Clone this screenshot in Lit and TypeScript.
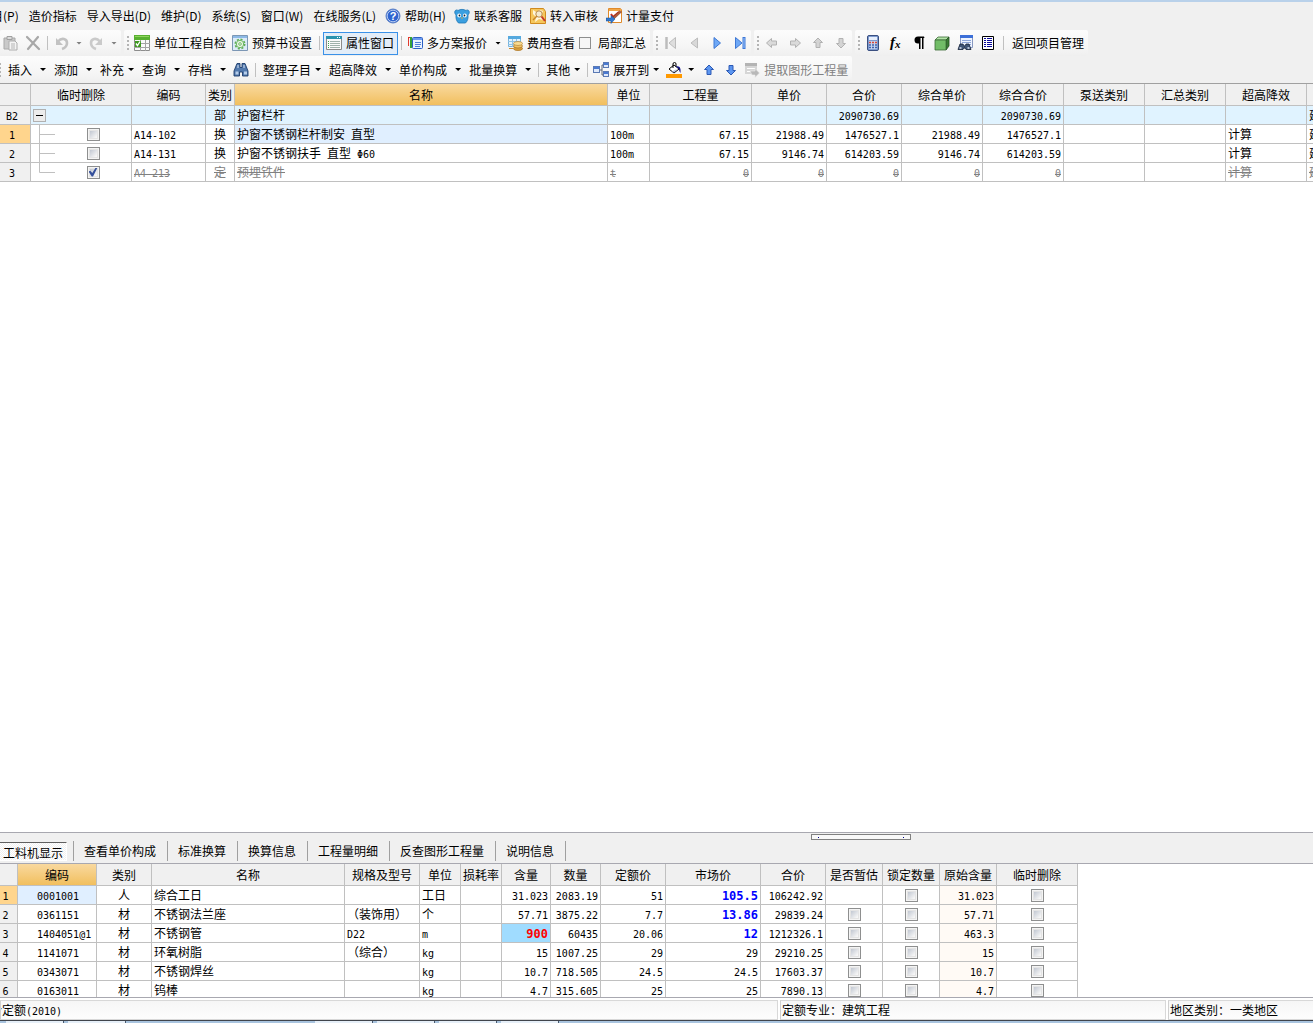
import { LitElement, html, css, svg, nothing } from "lit";
import type { TemplateResult } from "lit";
import { customElement } from "lit/decorators.js";
import { classMap } from "lit/directives/class-map.js";

const ART: Record<string, unknown> = {
  paste: svg`<path d="M1 3h11v11H1z" fill="#c9c9c9" stroke="#a9a9a9"/><path d="M4 1.500h5v3H4z" fill="#dcdcdc" stroke="#a0a0a0"/><path d="M6 6h6l2 2v7H6z" fill="#f4f4f4" stroke="#adadad"/><path d="M8 9h4M8 11h4M8 13h4" stroke="#b5b5b5"/>`,
  remove: svg`<path d="M2 2l12 12M13 2L3 14" stroke="#a8a8a8" stroke-width="2.200" stroke-linecap="round" fill="none"/>`,
  undo: svg`<path d="M4 6.500c4-4.500 9-2.500 9 1.500 0 3-2 5-5 6" stroke="#c2c2c2" stroke-width="2.600" fill="none"/><path d="M2 3v7h7z" fill="#c2c2c2"/>`,
  redo: svg`<path d="M11 6.500c-4-4.500-9-2.500-9 1.500 0 3 2 5 5 6" stroke="#cacaca" stroke-width="2.600" fill="none"/><path d="M13 3v7H6z" fill="#cacaca"/>`,
  check: svg`<path d="M.5.5h15v15H.5z" fill="#fafafa" stroke="#8c8c8c"/><path d="M0 0h16v5H0z" fill="#58b030"/><path d="M1 1h14v1H1z" fill="#8ed45c"/><path d="M6.500 5v11M11.500 5v11M0 8.500h16M0 12.500h16" stroke="#a4a4a4"/><path d="M1 6h6v6H1z" fill="#3f9a20"/><path d="M2 8.500l1.500 2 2.500-4" stroke="#fff" stroke-width="1.300" fill="none"/>`,
  gear: svg`<path d="M.5.5h15v15H.5z" fill="#dcebf8" stroke="#7c97b5"/><path d="M1 1h14v2H1z" fill="#8db9e6"/><circle cx="8" cy="9" r="4.600" fill="none" stroke="#5fae55" stroke-width="1.800" stroke-dasharray="2 1.600"/><circle cx="8" cy="9" r="3.700" fill="#e6f5e2" stroke="#6fb866"/><circle cx="8" cy="9" r="1.300" fill="#fff" stroke="#6fb866"/>`,
  props: svg`<path d="M.5 1.500h15v13H.5z" fill="#fafafa" stroke="#8b8b8b"/><path d="M0 1h16v3H0z" fill="#2a93ae"/><path d="M11 2.500h1M13 2.500h1" stroke="#fff"/><path d="M2 6.500h1M2 8.500h1M2 10.500h1M2 12.500h1" stroke="#3aa44c"/><path d="M4 6.500h10M4 8.500h10M4 10.500h10M4 12.500h10" stroke="#9fb1aa"/>`,
  plans: svg`<path d="M1.500 3v8M1 2.500h3" stroke="#e13b2e" fill="none"/><path d="M4 2v11" stroke="#35a238" stroke-width="2" fill="none"/><rect x="5.500" y="2.500" width="10" height="11" rx="1" fill="#eaf2ff" stroke="#2c5fc4"/><path d="M6 3h9v2H6z" fill="#6d9cf0"/><path d="M8 7.500h6M8 9.500h6M8 11.500h5" stroke="#4e7fd6"/>`,
  fee: svg`<path d="M1.500 1.500h12v10h-12z" fill="#e3f3ff" stroke="#78b4dc"/><path d="M1 1h13v3H1z" fill="#56a9de"/><path d="M5.500 4v8M9.500 4v8M1 6.500h12M1 9.500h12" stroke="#8fc3e6"/><ellipse cx="11" cy="13.500" rx="4.500" ry="2" fill="#dba23d" stroke="#a86e1c" stroke-width=".7"/><ellipse cx="11" cy="11" rx="4.500" ry="2" fill="#efc367" stroke="#a86e1c" stroke-width=".7"/><ellipse cx="11" cy="8.500" rx="4.500" ry="2" fill="#f8dc93" stroke="#b98535" stroke-width=".7"/><path d="M2 13h4v1H2z" fill="#c78a32"/>`,
  first: svg`<path d="M3.500 2v12" stroke="#bcbcbc" stroke-width="2.500"/><path d="M12.500 2.500v11L6 8z" fill="#dedede" stroke="#bcbcbc"/>`,
  prev: svg`<path d="M11.500 3v10L5 8z" fill="#d8d8d8" stroke="#bcbcbc"/>`,
  next: svg`<path d="M5 2.500v11L11.500 8z" fill="#6ea8f6" stroke="#3f78d4"/>`,
  last: svg`<path d="M3.500 2.500v11L10 8z" fill="#6ea8f6" stroke="#3f78d4"/><path d="M12 2v12" stroke="#3d78d8" stroke-width="3"/><path d="M12 3v10" stroke="#9cc4fb"/>`,
  left: svg`<path d="M2.500 8l5-4.500v2.500h5v4h-5v2.500z" fill="#dadada" stroke="#b2b2b2"/>`,
  right: svg`<path d="M13.500 8l-5-4.500v2.500h-5v4h5v2.500z" fill="#dadada" stroke="#b2b2b2"/>`,
  up: svg`<path d="M8 3l4.500 4.500H10v5H6v-5H3.500z" fill="#d4d4d4" stroke="#b2b2b2"/>`,
  down: svg`<path d="M8 13l4.500-4.500H10v-5H6v5H3.500z" fill="#d4d4d4" stroke="#b2b2b2"/>`,
  upBlue: svg`<path d="M8 3l4.500 4.500H10v5H6v-5H3.500z" fill="#5c96f0" stroke="#2c59b4"/>`,
  downBlue: svg`<path d="M8 13l4.500-4.500H10v-5H6v5H3.500z" fill="#5c96f0" stroke="#2c59b4"/>`,
  calc: svg`<rect x="2.500" y=".5" width="11" height="15" rx="1.500" fill="#7e9bd0" stroke="#3a4f80"/><path d="M4 2h8v3H4z" fill="#e6eefc"/><path d="M4 6h8v8H4z" fill="#c6d4ef"/><path d="M4 7.500h2M7 7.500h2M10 7.500h2" stroke="#d8483a" stroke-width="1.500"/><path d="M4 10h2M7 10h2M10 10h2M4 12.500h2M7 12.500h2M10 12.500h2" stroke="#3f62ac" stroke-width="1.500"/>`,
  fx: svg`<text x="2" y="12" font-family="Liberation Serif, serif" font-size="15" font-style="italic" font-weight="bold">f</text><text x="7" y="13" font-family="Liberation Serif, serif" font-size="11" font-style="italic" font-weight="bold">x</text>`,
  pilcrow: svg`<path d="M13 1.500H7a3.500 3.500 0 0 0 0 7h1V14h1.500V3H11v11h1.500V3h1z"/>`,
  cube: svg`<path d="M1 5l3-3h11l-3 3z" fill="#b4e4a9" stroke="#3b6a36" stroke-width=".8"/><path d="M12 5l3-3v9l-3 4z" fill="#3a7d34" stroke="#24501f" stroke-width=".8"/><path d="M1 5h11v10H1z" fill="#72bd67" stroke="#3b6a36" stroke-width=".8"/>`,
  find: svg`<path d="M3.500.5h12v12h-12z" fill="#eef4ff" stroke="#8797c0"/><path d="M3 0h13v3H3z" fill="#3c6fd8"/><path d="M5 5.500h9M5 7.500h9M11 9.500h3" stroke="#8fa6d8"/><path d="M3 9h3l1 2h1l1-2h3l2 5.500H9L8 13H7l-1 1.500H1z" fill="#3f5475" stroke="#152238" stroke-width=".8"/><path d="M2.500 13h2M10.500 13h2" stroke="#dce6f5" stroke-width="1.500"/>`,
  list: svg`<path d="M2.500 1.500h11v13h-11z" fill="#fff" stroke="#000"/><path d="M4 3.500h2M4 5.500h2M4 7.500h2M4 9.500h2M4 11.500h2M7 3.500h5M7 5.500h5M7 7.500h5M7 9.500h5M7 11.500h5" stroke="#0b0b9c"/>`,
  binoc: svg`<path d="M4 1.500h3v4h2v-4h3l3 7.500v5H9.500v-4h-3v4H1V9z" fill="#5279ad" stroke="#1d3c6c" stroke-width=".9"/><path d="M2.500 9.500h3v3h-3zM11 9.500h3v3h-3z" fill="#b6cdea"/><path d="M5 3v3M11 3v3" stroke="#d5e3f5"/>`,
  expand: svg`<path d="M6 8h3M9 3v10M9 3h2M9 13h2" stroke="#5a6478" fill="none"/><rect x=".5" y="4.500" width="6" height="6" fill="#dfe9fa" stroke="#5a79b4"/><path d="M1 5h5v2H1z" fill="#4a7ad2"/><rect x="10.500" y=".5" width="5" height="5" fill="#dfe9fa" stroke="#5a79b4"/><path d="M11 1h4v2h-4z" fill="#4a7ad2"/><rect x="10.500" y="9.500" width="5" height="5" fill="#dfe9fa" stroke="#5a79b4"/><path d="M11 10h4v2h-4z" fill="#4a7ad2"/>`,
  bucket: svg`<path d="M0 12h16v4H0z" fill="#ff9900"/><path d="M3 7l5-4 5 4-5 4z" fill="#fff" stroke="#000"/><path d="M7 6V2q0-1.500 1.500-1.500T10 2v3" fill="none" stroke="#000"/><path d="M10 4.500c4-1 5 2 4.500 6.500-1-1-1.500-3-1.500-4z" fill="#10108c"/><path d="M6 9.500l5-2.500-3 3.500z" fill="#a9b4d8"/>`,
  extract: svg`<path d="M1 1h12v11H1z" fill="#d6d6d6"/><path d="M1 1h12v3H1z" fill="#b4b4b4"/><path d="M3 6.500h8M3 9.500h4" stroke="#fff"/><path d="M6 9h5V6.500L15.500 11 11 15.500V13H8z" fill="#b9b9b9" stroke="#ececec" stroke-width=".6"/>`,
  help: svg`<circle cx="8" cy="8" r="7" fill="#2f64cf" stroke="#5b7fc4"/><circle cx="8" cy="8" r="5.800" fill="none" stroke="#d7e3f8" stroke-width=".8"/><text x="8" y="12" text-anchor="middle" font-family="Liberation Sans, sans-serif" font-size="11" font-weight="bold" fill="#fff">?</text>`,
  mascot: svg`<path d="M4 2.500c2.500-1.500 5.500-1.500 8 0 2-1.500 4 .5 3 3-.3.800-.8 1-1 1.500.3 3.500-.5 6-2.500 8h-7C2.500 13 1.700 10.500 2 7 1.800 6.500 1.300 6.300 1 5.500 0 3 2 1 4 2.500z" fill="#3a9fe0" stroke="#1b74b4" stroke-width=".8"/><circle cx="5.200" cy="7.500" r="1.900" fill="#fff"/><circle cx="10.800" cy="7.500" r="1.900" fill="#fff"/><circle cx="5.500" cy="7.500" r=".9" fill="#123"/><circle cx="10.500" cy="7.500" r=".9" fill="#123"/><path d="M7 9.500h2L8 11z" fill="#f3b12c"/>`,
  review: svg`<path d="M.5.500h13l2 3v12H.5z" fill="#f6c75c" stroke="#d08a1e"/><path d="M3 2l3 2 4-2 3 1-2 5 2 4-4-1-4 3 1-5-3-3z" fill="#fff6dc"/><circle cx="9" cy="6" r="3.200" fill="#f4ead0" stroke="#b98a4a"/><path d="M11.500 8.500L15 13" stroke="#c6372a" stroke-width="2"/><path d="M3 12l4-4" stroke="#c6842a" stroke-width="1.500"/>`,
  pay: svg`<path d="M2.500.5h12l1 1v13h-13z" fill="#fff" stroke="#e08a2a"/><path d="M3 1h12v2H3z" fill="#f0a648"/><path d="M5 6l2 3 6-5" stroke="#c9301f" stroke-width="2" fill="none"/><path d="M15.500 4L7 12l-2 1 .5-2.500L13.500 3z" fill="#b65a36" stroke="#6e2c18" stroke-width=".5"/><path d="M0 10h5V7.500L9 11l-4 4.500V13H0z" fill="#3179cf" stroke="#174c92" stroke-width=".5"/>`,
};

const icon = (name: string) =>
  html`<svg class="icon" viewBox="0 0 16 16" width="16" height="16" aria-hidden="true">${ART[name]}</svg>`;

/** Splits a label so that half-width characters get the monospaced face. */
const mixed = (s: string) =>
  s.split(/([\x20-\x7e\u03a6]+)/).map((p, i) => (i % 2 ? html`<span class="m">${p}</span>` : p));

interface Item {
  icon?: string;
  text?: string;
  name?: string;
  arrow?: "wide" | "tight";
  off?: boolean;
  on?: boolean;
  sep?: boolean;
  box?: boolean;
}
const SEP: Item = { sep: true };

const STRIPS: { grip: boolean; spaced?: boolean; items: Item[] }[] = [
  { grip: false, items: [
    { icon: "paste", name: "粘贴", off: true }, { icon: "remove", name: "删除", off: true }, SEP,
    { icon: "undo", name: "撤销", arrow: "wide", off: true }, { icon: "redo", name: "恢复", arrow: "wide", off: true } ] },
  { grip: true, items: [
    { icon: "check", text: "单位工程自检" }, { icon: "gear", text: "预算书设置" }, SEP,
    { icon: "props", text: "属性窗口", on: true }, SEP,
    { icon: "plans", text: "多方案报价", arrow: "wide" }, { icon: "fee", text: "费用查看" }, { text: "局部汇总", box: true } ] },
  { grip: true, spaced: true, items: [
    { icon: "first", name: "首页", off: true }, { icon: "prev", name: "上一个", off: true },
    { icon: "next", name: "下一个" }, { icon: "last", name: "末页" } ] },
  { grip: true, spaced: true, items: [
    { icon: "left", name: "左移", off: true }, { icon: "right", name: "右移", off: true },
    { icon: "up", name: "上移", off: true }, { icon: "down", name: "下移", off: true } ] },
  { grip: true, spaced: true, items: [
    { icon: "calc", name: "计算器" }, { icon: "fx", name: "函数" }, { icon: "pilcrow", name: "段落" },
    { icon: "cube", name: "图形" }, { icon: "find", name: "查找" }, { icon: "list", name: "列表" }, SEP,
    { text: "返回项目管理" } ] },
];

const ACTIONS: Item[] = [
  { text: "插入", arrow: "wide" }, { text: "添加", arrow: "wide" }, { text: "补充", arrow: "tight" },
  { text: "查询", arrow: "wide" }, { text: "存档", arrow: "wide" }, { icon: "binoc", name: "查找" }, SEP,
  { text: "整理子目", arrow: "tight" }, { text: "超高降效", arrow: "wide" }, { text: "单价构成", arrow: "wide" },
  { text: "批量换算", arrow: "wide" }, SEP, { text: "其他", arrow: "tight" }, SEP,
  { icon: "expand", text: "展开到", arrow: "tight" }, { icon: "bucket", name: "填充颜色", arrow: "wide" },
  { icon: "upBlue", name: "上移" }, { icon: "downBlue", name: "下移" },
  { icon: "extract", text: "提取图形工程量", off: true },
];

const MENU: { text: string; icon?: string }[] = [
  { text: "项目(P)" }, { text: "造价指标" }, { text: "导入导出(D)" }, { text: "维护(D)" }, { text: "系统(S)" },
  { text: "窗口(W)" }, { text: "在线服务(L)" }, { text: "帮助(H)", icon: "help" },
  { text: "联系客服", icon: "mascot" }, { text: "转入审核", icon: "review" }, { text: "计量支付", icon: "pay" },
];

interface Col { t: string; w: number; a?: "l" | "c" | "r" | "code"; }

const COLS: Col[] = [
  { t: "临时删除", w: 101 }, { t: "编码", w: 74 }, { t: "类别", w: 29, a: "c" }, { t: "名称", w: 373 },
  { t: "单位", w: 42 }, { t: "工程量", w: 102, a: "r" }, { t: "单价", w: 75, a: "r" }, { t: "合价", w: 75, a: "r" },
  { t: "综合单价", w: 81, a: "r" }, { t: "综合合价", w: 81, a: "r" }, { t: "泵送类别", w: 81 },
  { t: "汇总类别", w: 81 }, { t: "超高降效", w: 81 }, { t: "", w: 81 },
];
const ROWS: { no: string; kind: "group" | "row" | "gone"; cells: string[] }[] = [
  { no: "B2", kind: "group", cells: ["", "部", "护窗栏杆", "", "", "", "2090730.69", "", "2090730.69", "", "", "", "建"] },
  { no: "1", kind: "row", cells: ["A14-102", "换", "护窗不锈钢栏杆制安 直型", "100m", "67.15", "21988.49", "1476527.1", "21988.49", "1476527.1", "", "", "计算", "建"] },
  { no: "2", kind: "row", cells: ["A14-131", "换", "护窗不锈钢扶手 直型 Φ60", "100m", "67.15", "9146.74", "614203.59", "9146.74", "614203.59", "", "", "计算", "建"] },
  { no: "3", kind: "gone", cells: ["A4-213", "定", "预埋铁件", "t", "0", "0", "0", "0", "0", "", "", "计算", "建"] },
];

const RES_COLS: Col[] = [
  { t: "编码", w: 79, a: "code" }, { t: "类别", w: 55, a: "c" }, { t: "名称", w: 193 }, { t: "规格及型号", w: 75 },
  { t: "单位", w: 41 }, { t: "损耗率", w: 41 }, { t: "含量", w: 49, a: "r" }, { t: "数量", w: 50, a: "r" },
  { t: "定额价", w: 65, a: "r" }, { t: "市场价", w: 95, a: "r" }, { t: "合价", w: 65, a: "r" },
  { t: "是否暂估", w: 57, a: "c" }, { t: "锁定数量", w: 57, a: "c" }, { t: "原始含量", w: 57, a: "r" },
  { t: "临时删除", w: 81, a: "c" },
];
const BOX = "[]";
const RES: string[][] = [
  ["0001001", "人", "综合工日", "", "工日", "", "31.023", "2083.19", "51", "105.5", "106242.92", "", BOX, "31.023", BOX],
  ["0361151", "材", "不锈钢法兰座", "（装饰用）", "个", "", "57.71", "3875.22", "7.7", "13.86", "29839.24", BOX, BOX, "57.71", BOX],
  ["1404051@1", "材", "不锈钢管", "D22", "m", "", "900", "60435", "20.06", "12", "1212326.1", BOX, BOX, "463.3", BOX],
  ["1141071", "材", "环氧树脂", "（综合）", "kg", "", "15", "1007.25", "29", "29", "29210.25", BOX, BOX, "15", BOX],
  ["0343071", "材", "不锈钢焊丝", "", "kg", "", "10.7", "718.505", "24.5", "24.5", "17603.37", BOX, BOX, "10.7", BOX],
  ["0163011", "材", "钨棒", "", "kg", "", "4.7", "315.605", "25", "25", "7890.13", BOX, BOX, "4.7", BOX],
];

const TABS = ["工料机显示", "查看单价构成", "标准换算", "换算信息", "工程量明细", "反查图形工程量", "说明信息"];

const shared = css`
  * { box-sizing: border-box; }
  button, input { font: inherit; color: inherit; margin: 0; }
  button { background: none; border: 0; padding: 0; white-space: nowrap; }
  .icon { display: block; flex: none; }
  .m { font-family: "DejaVu Sans Mono", "Liberation Mono", monospace; font-size: 10px; line-height: 0; white-space: pre; }
`;

@customElement("tool-strip")
class ToolStrip extends LitElement {
  static properties = { items: { attribute: false }, grip: { type: Boolean }, spaced: { type: Boolean } };
  declare items: Item[];
  declare grip: boolean;
  declare spaced: boolean;

  static styles = [shared, css`
    :host { display: flex; flex: none; }
    .strip { display: flex; align-items: center; height: 100%; border-radius: 2px; background: linear-gradient(#fcfcfc, #f6f6f6 60%, #efefef); }
    .grip { width: 2px; height: 14px; margin: 0 3px; background: repeating-linear-gradient(#b4b4b4 0 2px, transparent 2px 4px); }
    .spaced { gap: 1px; }
    .spaced .grip { margin-right: 1px; }
    .sep { width: 1px; height: 14px; margin: 0 3px; background: #c0c0c0; }
    .btn { display: flex; align-items: center; height: 23px; padding: 0 4px; gap: 4px; }
    .btn.pic { padding-left: 2px; }
    .btn.bare { padding: 0 3px; }
    .btn.drop { padding-right: 4px; }
    .btn.on { border: 1px solid #3a91e8; background: #e3edf8; padding-right: 3px; }
    .btn:disabled { color: #808080; }
    .arrow { width: 6px; height: 3px; background: currentColor; clip-path: polygon(0 0, 100% 0, 50% 100%); }
    .wide { margin-left: 4px; }
    .bare .wide { margin-left: 2px; }
    .tick { display: flex; align-items: center; gap: 7px; padding-right: 4px; }
    .tick input { appearance: none; width: 12px; height: 12px; border: 1px solid #8e8f8f; background: #f6f6f6; }
  `];

  private item(i: Item): TemplateResult {
    if (i.sep) return html`<span class="sep"></span>`;
    if (i.box) return html`<label class="tick"><input type="checkbox" />${i.text}</label>`;
    const cls = { btn: true, pic: !!i.icon && !!i.text, bare: !i.text, drop: !!i.arrow, on: !!i.on };
    return html`<button class=${classMap(cls)} ?disabled=${i.off} aria-label=${i.text ?? i.name}>
      ${i.icon ? icon(i.icon) : nothing}${i.text ? html`<span>${i.text}</span>` : nothing}${i.arrow
        ? html`<span class="arrow ${i.arrow}"></span>` : nothing}
    </button>`;
  }

  render() {
    return html`<div class=${classMap({ strip: true, spaced: this.spaced })}>
      ${this.grip ? html`<span class="grip"></span>` : nothing}${this.items.map((i) => this.item(i))}
    </div>`;
  }
}

const gridStyles = css`
  :host { display: block; overflow: hidden; }
  table { border-collapse: separate; border-spacing: 0; table-layout: fixed; width: 0; }
  th, td { height: 19px; padding: 0 2px; border-right: 1px solid #c0c0c0; border-bottom: 1px solid #c0c0c0; line-height: 18px; white-space: nowrap; overflow: hidden; font-weight: 400; text-align: left; }
  thead th { height: 22px; padding: 0; text-align: center; background: #f0f0f0; }
  thead th.hot { background: linear-gradient(#f9d99f, #f1bf5e); }
  tbody th { padding: 0 6px 0 0; text-align: center; background: #f0f0f0; }
  tbody th.hot { background: #ffd58d; }
  .c { text-align: center; padding: 0; }
  .r { text-align: right; }
  .sel { background: #e0efff; }
  .box { display: block; appearance: none; width: 13px; height: 13px; margin: 0 auto; padding: 1px; border: 1px solid #8e8f8f; background: linear-gradient(135deg, #b9c0cc, #f6f6f6 80%) content-box, #f4f4f4; outline: 1px solid #e4e4e4; outline-offset: -3px; }
  .box:checked::before { content: ""; display: block; width: 9px; height: 9px; background: #35509c; clip-path: polygon(0 45%, 20% 35%, 42% 62%, 80% 0, 100% 0, 50% 100%, 36% 100%); }
`;

@customElement("quota-grid")
class QuotaGrid extends LitElement {
  static styles = [shared, gridStyles, css`
    .group td { background: #e0f3ff; }
    .gone td { color: #808080; text-decoration: line-through; }
    .gone td .m { display: inline-block; text-decoration: line-through; }
    .tree { padding: 0; }
    .node { display: flex; align-items: center; height: 18px; }
    .branch { display: block; flex: none; overflow: visible; }
    .toggle { display: grid; place-items: center; width: 13px; height: 13px; margin-left: 2px; border: 1px solid #b0b0b0; background: #ececec; }
    .toggle::before { content: ""; width: 7px; height: 1px; background: #000; }
  `];

  private tree(kind: string, no: string) {
    if (kind === "group") return html`<div class="node"><button class="toggle" aria-label="折叠"></button></div>`;
    return html`<div class="node">
      <svg class="branch" width="24" height="18" aria-hidden="true">
        <path d=${kind === "gone" ? "M8.500 0V9.500H24" : "M8.500 0V19M8.500 9.500H24"} fill="none" stroke="#c0c0c0" />
      </svg>
      <input class="box" type="checkbox" aria-label=${"临时删除 " + no} .checked=${kind === "gone"} />
    </div>`;
  }

  render() {
    return html`<table>
      <colgroup><col style="width:31px" />${COLS.map((c) => html`<col style="width:${c.w}px" />`)}</colgroup>
      <thead><tr><th></th>${COLS.map((c) => html`<th class=${c.t === "名称" ? "hot" : ""}>${c.t}</th>`)}</tr></thead>
      <tbody>${ROWS.map((r) => html`<tr class=${r.kind}>
        <th class=${r.no === "1" ? "hot" : ""}>${mixed(r.no)}</th>
        <td class="tree">${this.tree(r.kind, r.no)}</td>
        ${r.cells.map((v, i) => html`<td class="${COLS[i + 1].a ?? "l"} ${r.no === "1" && i === 2 ? "sel" : ""}">${mixed(v)}</td>`)}
      </tr>`)}</tbody>
    </table>`;
  }
}

@customElement("resource-grid")
class ResourceGrid extends LitElement {
  static styles = [shared, gridStyles, css`
    :host { height: 133px; background: #fff; }
    .code { padding-left: 19px; }
    .price { font-weight: 700; color: #00f; }
    .edited { font-weight: 700; color: #f00; background: #a0dcff; }
    .price .m, .edited .m { font-size: 12px; }
    .origin { background: #fffaf5; }
  `];

  private cls(row: number, col: number) {
    return classMap({
      [RES_COLS[col].a ?? "l"]: true,
      sel: row === 0 && col === 0,
      edited: row === 2 && col === 6,
      price: row < 3 && col === 9,
      origin: col === 13,
    });
  }

  render() {
    return html`<table>
      <colgroup><col style="width:18px" />${RES_COLS.map((c) => html`<col style="width:${c.w}px" />`)}</colgroup>
      <thead><tr><th></th>${RES_COLS.map((c, i) => html`<th class=${i === 0 ? "hot" : ""}>${c.t}</th>`)}</tr></thead>
      <tbody>${RES.map((r, n) => html`<tr>
        <th class=${n === 0 ? "hot" : ""}>${mixed(String(n + 1))}</th>
        ${r.map((v, i) => html`<td class=${this.cls(n, i)}>${v === BOX
          ? html`<input class="box" type="checkbox" aria-label="${RES_COLS[i].t} ${n + 1}" />` : mixed(v)}</td>`)}
      </tr>`)}</tbody>
    </table>`;
  }
}

@customElement("app-root")
class AppRoot extends LitElement {
  static styles = [shared, css`
    :host { display: flex; flex-direction: column; height: 100vh; overflow: hidden; background: #fff; color: #000; font: 12px/18px "Noto Sans CJK SC", "Liberation Sans", sans-serif; }
    .top { flex: none; background: #f0f0f0; border-top: 2px solid #b9d1ea; border-bottom: 1px solid #a0a0a0; }
    .menu { display: flex; align-items: center; gap: 10px; height: 28px; margin-left: -21px; overflow: hidden; }
    .entry { display: flex; align-items: center; gap: 4px; }
    .entry.pic { margin-left: -1px; }
    .entry.pic ~ .pic { margin-left: -2px; }
    .bar { display: flex; gap: 3px; height: 26px; }
    .bar.second { height: 27px; margin-left: -4px; }
    .work { flex: 1; min-height: 0; }
    .panel { flex: none; background: #f0f0f0; border-top: 1px solid #a8a8b0; position: relative; }
    .handle { position: absolute; top: 1px; left: 811px; width: 100px; height: 6px; border: 1px solid #808080; background: #f8f8f8; display: flex; justify-content: space-between; align-items: center; padding: 0 6px; }
    .handle::before, .handle::after { content: ""; width: 1px; height: 1px; background: #00008b; }
    .tabs { display: flex; height: 31px; padding-top: 8px; border-bottom: 1px solid #a8a8b0; }
    .tab { height: 20px; padding: 0 11px 0 10px; border-right: 1px solid #a0a0a0; }
    .tab.first { padding: 0 6px 0 0; }
    .pressed { display: block; height: 19px; padding: 1px 3px 0; border-top: 1px solid #606060; border-right: 1px solid #fff; border-bottom: 1px solid #fff; background: repeating-conic-gradient(#f0f0f0 0 25%, #fff 0 50%) 0 0 / 2px 2px; line-height: 17px; }
    .status { display: flex; flex: none; gap: 2px; padding-top: 2px; border-top: 1px solid #a8a8b0; border-bottom: 1px solid #40444c; }
    .cell { height: 20px; padding-left: 1px; border: 1px solid #d8d8d8; border-left-color: #d0d0d0; background: linear-gradient(#f6f6f6, #fdfdfd); white-space: nowrap; overflow: hidden; }
    .quota { flex: 1; }
    .quota span.clip { display: block; margin-left: -12px; }
    .major { width: 386px; }
    .area { width: 145px; border-right: 0; }
    .dock { display: flex; flex: none; gap: 4px; height: 2px; padding-left: 6px; background: #a9c4df; }
    .slot { width: 58px; background: #e6eff8; border-right: 1px solid #48586c; }
    .slot.far { margin-left: 185px; }
  `];

  render() {
    return html`
      <header class="top">
        <nav class="menu">
          ${MENU.map((m) => html`<button class="entry ${m.icon ? "pic" : ""}">${m.icon ? icon(m.icon) : nothing}<span>${m.text}</span></button>`)}
        </nav>
        <div class="bar">
          ${STRIPS.map((s) => html`<tool-strip .items=${s.items} .grip=${s.grip} .spaced=${!!s.spaced}></tool-strip>`)}
        </div>
        <div class="bar second"><tool-strip .items=${ACTIONS} .grip=${true} .spaced=${false}></tool-strip></div>
      </header>
      <quota-grid class="work"></quota-grid>
      <section class="panel">
        <div class="handle"></div>
        <div class="tabs" role="tablist">
          ${TABS.map((t, i) => html`<button class="tab ${i ? "" : "first"}" role="tab" aria-selected=${i ? "false" : "true"}>${i
            ? t : html`<span class="pressed">${t}</span>`}</button>`)}
        </div>
        <resource-grid></resource-grid>
      </section>
      <footer class="status">
        <div class="cell quota"><span class="clip">合定额<span class="m">(2010)</span></span></div>
        <div class="cell major">定额专业：建筑工程</div>
        <div class="cell area">地区类别：一类地区</div>
      </footer>
      <div class="dock">
        <span class="slot"></span><span class="slot"></span><span class="slot far"></span>
        <span class="slot"></span><span class="slot"></span><span class="slot"></span>
      </div>
    `;
  }
}
